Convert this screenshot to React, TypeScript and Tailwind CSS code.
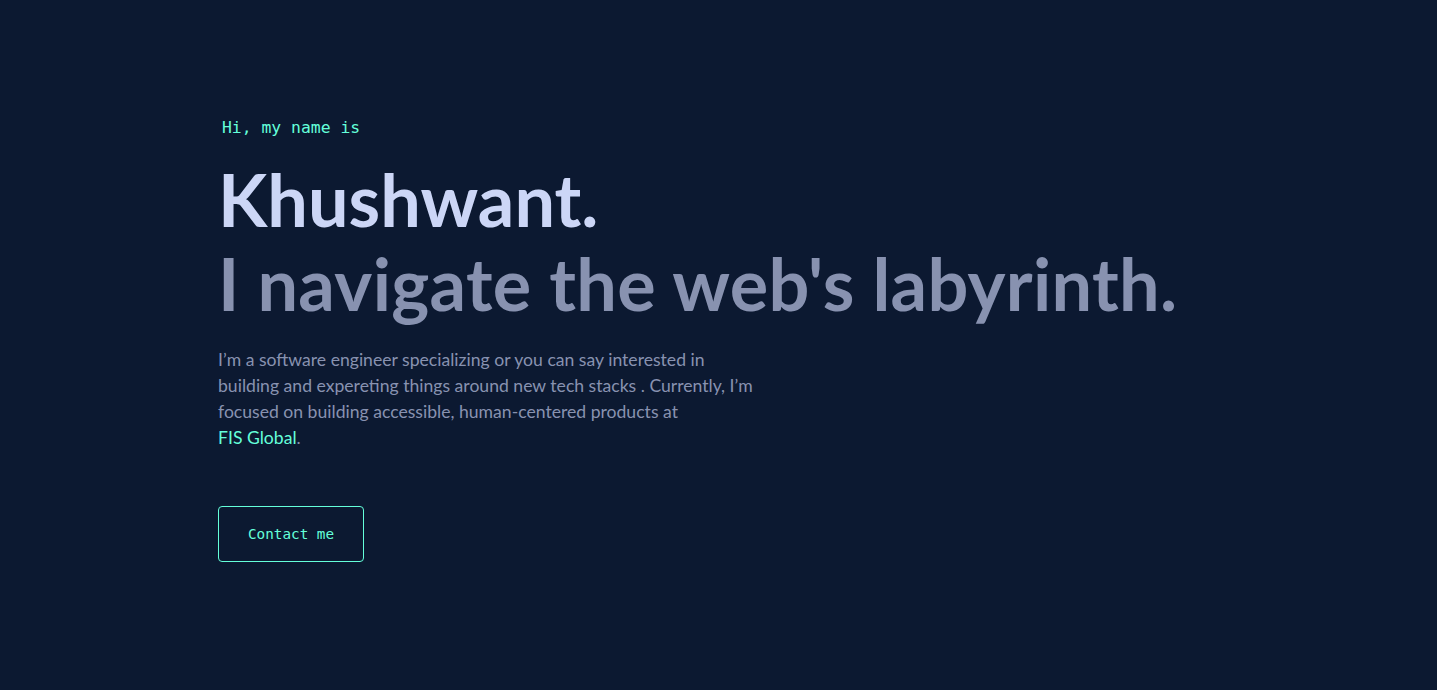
import React from "react";

export default function App() {
  return (
    <div className="min-h-screen w-full bg-[#0c1931] flex flex-col justify-center pl-[218px] pb-[8px] h-[690px] font-['Lato',sans-serif]">
      <p className="ml-[4px] mb-[20px] text-[16.4px] leading-none text-[#64ffda] font-['DejaVu_Sans_Mono',monospace]">
        Hi, my name is
      </p>
      <h1 className="text-[72px] leading-[84px] font-bold text-[#ccd6f6]">
        Khushwant.
      </h1>
      <h2 className="text-[72px] leading-[84px] font-bold text-[#8892b0] tracking-[0.3px]">
        I navigate the web's labyrinth.
      </h2>
      <p className="mt-[22px] max-w-[560px] text-[17.6px] leading-[26px] text-[#8892b0]">
        I’m a software engineer specializing or you can say interested in<br />
        building and expereting things around new tech stacks . Currently, I’m<br />
        focused on building accessible, human-centered products at<br />
        <a className="text-[#64ffda]">FIS Global</a>.
      </p>
      <div className="mt-[55px]">
        <button className="border border-[#64ffda] rounded-[4px] px-[29px] py-[19px] text-[14.3px] leading-[16px] text-[#64ffda] font-['DejaVu_Sans_Mono',monospace]">
          Contact me
        </button>
      </div>
    </div>
  );
}
